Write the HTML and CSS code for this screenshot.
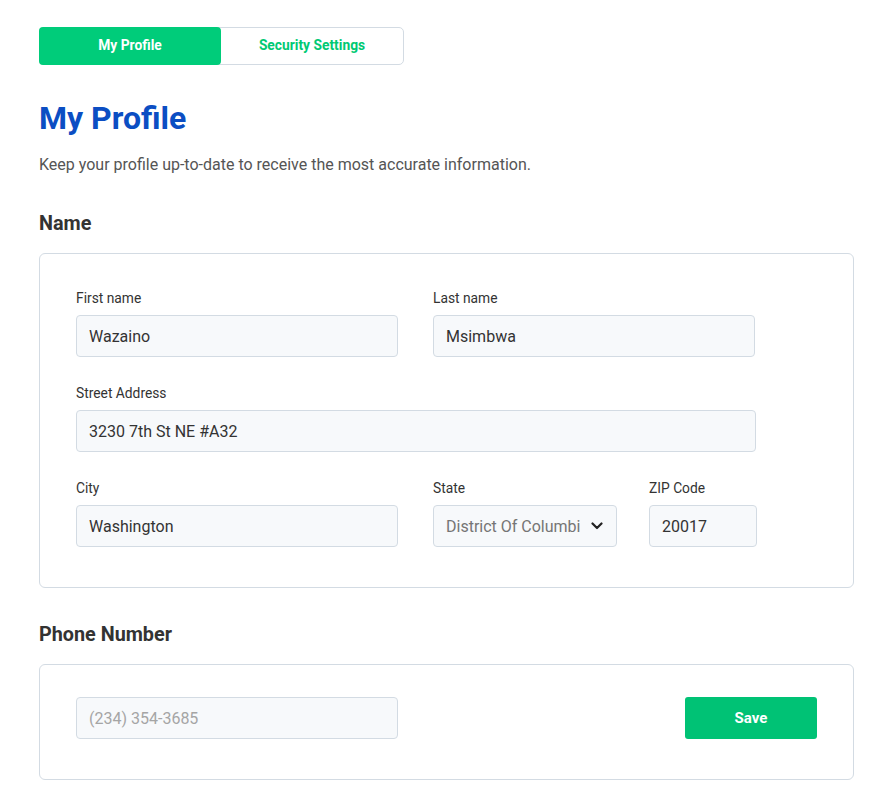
FILE: index.html
```html
<!DOCTYPE html>
<html lang="en">
<head>
<meta charset="utf-8">
<title>My Profile</title>
<link rel="stylesheet" href="styles.css">
</head>
<body>
<main class="page">
  <nav class="tabs">
    <button class="tab tab-active">My Profile</button>
    <button class="tab">Security Settings</button>
  </nav>

  <h1 class="title">My Profile</h1>
  <p class="lead">Keep your profile up-to-date to receive the most accurate information.</p>

  <h2 class="section-title">Name</h2>
  <section class="card card-form">
    <div class="row">
      <label class="field w-half">
        <span class="label">First name</span>
        <input class="input" type="text" value="Wazaino">
      </label>
      <label class="field w-half">
        <span class="label">Last name</span>
        <input class="input" type="text" value="Msimbwa">
      </label>
    </div>
    <div class="row">
      <label class="field w-full">
        <span class="label">Street Address</span>
        <input class="input" type="text" value="3230 7th St NE #A32">
      </label>
    </div>
    <div class="row">
      <label class="field w-half">
        <span class="label">City</span>
        <input class="input" type="text" value="Washington">
      </label>
      <label class="field w-state">
        <span class="label">State</span>
        <span class="select-wrap">
          <select class="input select">
            <option>District Of Columbia</option>
          </select>
          <svg class="chevron" width="12" height="8" viewBox="0 0 12 8"><path d="M1.5 1.5 L6 6 L10.5 1.5" fill="none" stroke="#222" stroke-width="2.2" stroke-linecap="round" stroke-linejoin="round"/></svg>
        </span>
      </label>
      <label class="field w-zip">
        <span class="label">ZIP Code</span>
        <input class="input" type="text" value="20017">
      </label>
    </div>
  </section>

  <h2 class="section-title">Phone Number</h2>
  <section class="card card-phone">
    <input class="input w-half" type="text" placeholder="(234) 354-3685">
    <button class="save">Save</button>
  </section>
</main>
</body>
</html>
```

FILE: styles.css
```css
* { box-sizing: border-box; }

body {
  margin: 0;
  background: #ffffff;
  font-family: Roboto, "Liberation Sans", Arial, sans-serif;
  color: #333333;
}

.page {
  padding: 27px 33px 40px 39px;
  width: 887px;
}

.tabs {
  display: flex;
  width: 365px;
  height: 38px;
  border: 1px solid #d3dbe3;
  border-radius: 5px;
}

.tab {
  flex: 1;
  margin: 0;
  padding: 0 0 2px;
  border: 0;
  background: transparent;
  font-family: inherit;
  font-size: 13.8px;
  font-weight: 700;
  color: #00c973;
  border-radius: 4px;
  cursor: pointer;
}

.tab-active {
  margin: -1px 0 -1px -1px;
  background: #00cc7a;
  color: #ffffff;
}

.title {
  margin: 34px 0 0;
  font-size: 32px;
  line-height: 38px;
  font-weight: 700;
  color: #0b4ec3;
}

.lead {
  margin: 18px 0 0;
  font-size: 16px;
  line-height: 20px;
  color: #555555;
}

.section-title {
  margin: 37px 0 0;
  font-size: 19.8px;
  line-height: 24px;
  font-weight: 700;
  color: #333333;
}

.section-title + .card { margin-top: 17px; }
.card + .section-title { margin-top: 35px; }

.card {
  width: 815px;
  border: 1px solid #d3dbe3;
  border-radius: 6px;
  background: #ffffff;
}

.card-form {
  padding: 36px 36px 40px;
}

.row {
  display: flex;
  gap: 35px;
}

.row + .row { margin-top: 28px; }

.field {
  display: flex;
  flex-direction: column;
}

.label {
  font-size: 13.8px;
  line-height: 17px;
  color: #333333;
  margin-bottom: 8px;
}

.input {
  display: block;
  width: 100%;
  height: 42px;
  margin: 0;
  padding: 0 12px;
  border: 1px solid #d3dbe3;
  border-radius: 4px;
  background: #f7f9fb;
  font-family: inherit;
  font-size: 16px;
  color: #333333;
  outline: none;
}

.input::placeholder { color: #a5a5a5; }

.w-half { width: 322px; }
.w-full { width: 680px; }
.w-state { width: 184px; }
.w-zip { width: 108px; margin-left: -3px; }

.select-wrap {
  position: relative;
  display: block;
}

.select {
  appearance: none;
  -webkit-appearance: none;
  padding-right: 36px;
  color: #757575;
}

.chevron {
  position: absolute;
  right: 14px;
  top: 17px;
  pointer-events: none;
}

.card-phone {
  display: flex;
  justify-content: space-between;
  align-items: center;
  padding: 32px 36px 40px;
}

.save {
  width: 132px;
  height: 42px;
  border: 0;
  border-radius: 3px;
  background: #00c275;
  color: #ffffff;
  font-family: inherit;
  font-size: 15px;
  font-weight: 700;
}
```
